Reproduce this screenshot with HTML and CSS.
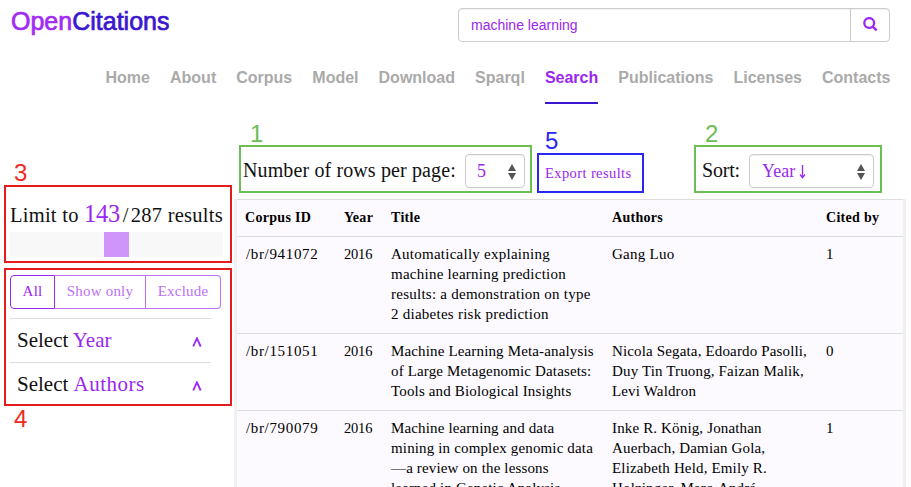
FILE: index.html
```
<!DOCTYPE html>
<html lang="en">
<head>
<meta charset="utf-8">
<title>OpenCitations - Search</title>
<link rel="stylesheet" href="styles.css">
</head>
<body>
<header class="top">
  <div class="logo"><span>Open</span>Citations</div>
  <div class="search">
    <div class="query">machine learning</div>
    <div class="go"><svg width="15" height="15" viewBox="0 0 15 15"><circle cx="6.2" cy="6" r="4.9"/><path d="M9.7 9.6 13.7 13.4"/></svg></div>
  </div>
</header>
<nav class="menu">
  <span>Home</span><span>About</span><span>Corpus</span><span>Model</span><span>Download</span><span>Sparql</span><span class="active">Search</span><span>Publications</span><span>Licenses</span><span>Contacts</span>
</nav>
<div class="main">
  <aside class="side">
    <section class="box red limit">
      <b class="num above">3</b>
      <div class="limit-text">Limit to <em>143</em><span class="slash">/</span>287 results</div>
      <div class="slider"><div class="handle"></div></div>
    </section>
    <section class="box red filter">
      <b class="num below">4</b>
      <div class="buttons"><span class="all">All</span><span class="only">Show only</span><span class="excl">Exclude</span></div>
      <div class="select"><span>Select <em>Year</em></span><svg width="10" height="10" viewBox="0 0 10 10"><path d="M1.2 9.5 4.9 1.3 8.7 9.5"/></svg></div>
      <div class="select"><span>Select <em class="wide">Authors</em></span><svg width="10" height="10" viewBox="0 0 10 10"><path d="M1.2 9.5 4.9 1.3 8.7 9.5"/></svg></div>
    </section>
  </aside>
  <div class="content">
    <div class="tools">
      <div class="box green rows"><b class="num above">1</b><span class="label-rows">Number of rows per page:</span>
        <div class="drop five"><span>5</span><svg width="8" height="16" viewBox="0 0 8 16"><path d="M4 0 8 7H0ZM0 9H8L4 16Z"/></svg></div></div>
      <div class="box blue export"><b class="num above">5</b><span>Export results</span></div>
      <div class="box green sort"><b class="num above">2</b><span class="label-sort">Sort:</span>
        <div class="drop year"><span>Year</span><svg class="arrow" width="7" height="14" viewBox="0 0 7 14"><path d="M3.5 0V12M1 9.5 3.5 12.7 6 9.5"/></svg><svg width="8" height="16" viewBox="0 0 8 16"><path d="M4 0 8 7H0ZM0 9H8L4 16Z"/></svg></div></div>
    </div>
    <div class="results">
      <div class="row head"><div>Corpus ID</div><div>Year</div><div>Title</div><div>Authors</div><div>Cited by</div></div>
      <div class="row"><div class="id">/br/941072</div><div class="yr">2016</div><div>Automatically explaining<br>machine learning prediction<br>results: a demonstration on type<br>2 diabetes risk prediction</div><div>Gang Luo</div><div>1</div></div>
      <div class="row tight"><div class="id">/br/151051</div><div class="yr">2016</div><div>Machine Learning Meta-analysis<br>of Large Metagenomic Datasets:<br>Tools and Biological Insights</div><div>Nicola Segata, Edoardo Pasolli,<br>Duy Tin Truong, Faizan Malik,<br>Levi Waldron</div><div>0</div></div>
      <div class="row tight"><div class="id">/br/790079</div><div class="yr">2016</div><div>Machine learning and data<br>mining in complex genomic data<br>—a review on the lessons<br>learned in Genetic Analysis</div><div>Inke R. König, Jonathan<br>Auerbach, Damian Gola,<br>Elizabeth Held, Emily R.<br>Holzinger, Marc-André</div><div>1</div></div>
    </div>
  </div>
</div>
</body>
</html>
```
FILE: styles.css
```
* { box-sizing: border-box; }
body {
  margin: 0;
  width: 911px;
  height: 487px;
  overflow: hidden;
  background: #fff;
  color: #111;
  font-family: "Palatino Linotype", Palatino, "Liberation Serif", serif;
}
em { font-style: normal; color: #9b26f0; }

.top { display: flex; justify-content: space-between; height: 42px; padding: 8px 21px 0 11px; }
.logo {
  font: 25px/27px "Liberation Sans", sans-serif;
  color: #3a16d0;
  -webkit-text-stroke: 0.7px currentColor;
}
.logo span { color: #a12af5; }
.search {
  display: flex;
  width: 432px;
  height: 34px;
  border: 1px solid #ccc;
  border-radius: 4px;
  box-shadow: inset 0 1px 1px rgba(0, 0, 0, 0.06);
}
.query { flex: 1; padding-left: 12px; font: 14px/32px "Liberation Sans", sans-serif; color: #9b26f0; }
.go { width: 39px; border-left: 1px solid #ccc; padding: 8px 0 0 12px; line-height: 0; }
.go svg { fill: none; stroke: #9b26f0; stroke-width: 2.3; }

.menu {
  display: flex;
  justify-content: space-between;
  height: 62px;
  padding: 26px 20.5px 0 105.5px;
  font: bold 16px/19px "Liberation Sans", sans-serif;
  color: #aaa;
}
.menu .active { color: #9b26f0; border-bottom: 2px solid #3a16d0; }

.main { display: flex; height: 383px; }
.box { position: relative; border: 2px solid; }
.red { border-color: #e61c1c; }
.green { border-color: #6cbd53; }
.blue { border-color: #2828f0; }
.num { position: absolute; font: 24px/24px "Liberation Sans", sans-serif; }
.red .num { color: #f02a1d; }
.green .num { color: #6cbd53; }
.blue .num { color: #2828f0; }
.above { left: 8px; top: -26px; }
.green .above { left: 9px; top: -25px; }
.blue .above { left: 6px; }
.below { left: 8px; top: 137px; }

.side { width: 234px; padding: 81px 2px 0 4px; display: flex; flex-direction: column; gap: 5px; }
.limit { height: 78px; padding: 13px 4px 0; }
.limit-text { height: 32px; font-size: 20.5px; line-height: 27px; letter-spacing: 0.25px; white-space: nowrap; }
.limit-text em { font-size: 24.5px; letter-spacing: -0.3px; }
.slash { margin: 0 2px 0 3px; }
.slider { width: 213px; height: 25px; background: #f8f8f8; }
.handle { width: 25px; height: 25px; margin-left: 94px; background: #cf95f8; }

.filter { height: 138px; padding: 5px 4px 0; }
.buttons { display: flex; width: 211px; height: 34px; margin-bottom: 9px; font-size: 15px; line-height: 31px; text-align: center; white-space: nowrap; letter-spacing: 0.2px; color: #bd70f5; }
.buttons span { border: 1px solid #bd70f5; }
.buttons .all { width: 45px; border-color: #9b26f0; color: #9b26f0; border-radius: 4px 0 0 4px; }
.buttons .only { width: 91px; border-left: 0; }
.buttons .excl { width: 75px; border-left: 0; border-radius: 0 4px 4px 0; }
.select { display: flex; justify-content: space-between; width: 201px; height: 44px; padding: 0 9px 0 7px; border-top: 1px solid #ddd; font-size: 21px; line-height: 42px; }
.select .wide { letter-spacing: 0.5px; }
.select svg { margin-top: 18px; fill: none; stroke: #9b26f0; stroke-width: 1.8; }

.content { width: 677px; padding-top: 41px; }
.tools { display: flex; align-items: flex-end; height: 48px; padding-left: 5px; }
.rows { width: 293px; height: 48px; padding: 7px 5px 0 2px; display: flex; justify-content: space-between; }
.label-rows, .label-sort { font-size: 20px; line-height: 32px; white-space: nowrap; }
.label-rows { letter-spacing: 0.12px; }
.label-sort { letter-spacing: -0.2px; }
.drop { display: flex; justify-content: space-between; height: 34px; padding: 0 8px 0 11px; border: 1px solid #ccc; border-radius: 4px; box-shadow: inset 0 1px 1px rgba(0, 0, 0, 0.06); font-size: 18px; line-height: 32px; color: #9b26f0; }
.drop svg { margin-top: 9px; fill: #555; }
.drop .arrow { margin: 10px auto 0 4px; fill: none; stroke: #9b26f0; stroke-width: 1.3; }
.five { width: 60px; }
.year { width: 125px; padding-left: 12px; }
.export { width: 107px; height: 40px; margin-left: 5px; padding-left: 6px; font-size: 14.5px; line-height: 37px; letter-spacing: 0.4px; white-space: nowrap; color: #9b26f0; }
.sort { width: 188px; height: 48px; margin-left: 50px; padding: 7px 6px 0; display: flex; justify-content: space-between; }

.results { width: 672px; margin-top: 6px; border: solid #f0f0f2; border-width: 0 3px; background: #fcfaff; color: #000; }
.row {
  display: grid;
  grid-template-columns: 99px 47px 221px 214px 77px;
  padding: 7px 0 9px 8px;
  border-top: 1px solid #ddd;
  font-size: 15px;
  line-height: 20px;
  letter-spacing: 0.25px;
  white-space: nowrap;
}
.tight { letter-spacing: 0.15px; }
.row .id { padding-left: 1px; letter-spacing: 0.65px; }
.row .yr { font-size: 14.5px; letter-spacing: -0.2px; }
.head { padding: 8px 0 8px 8px; font-weight: bold; font-size: 14px; letter-spacing: 0.3px; }
```
